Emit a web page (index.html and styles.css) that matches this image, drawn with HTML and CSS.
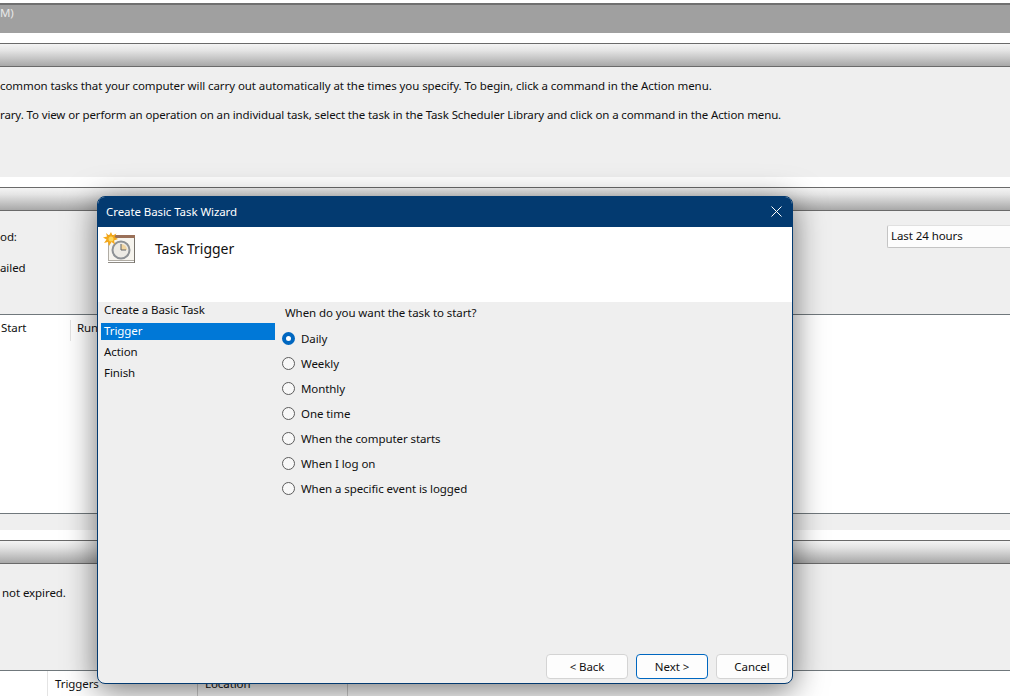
FILE: index.html
```html
<!DOCTYPE html>
<html lang="en">
<head>
    <meta charset="UTF-8">
    <title>Create Basic Task Wizard</title>
    <link rel="stylesheet" href="styles.css">
</head>
<body>
    <div class="page">
        <div class="top-band"><span>M)</span></div>

        <div class="section-head overview-head"></div>
        <div class="overview">
            <p>common tasks that your computer will carry out automatically at the times you specify. To begin, click a command in the Action menu.</p>
            <p>rary. To view or perform an operation on an individual task, select the task in the Task Scheduler Library and click on a command in the Action menu.</p>
        </div>

        <div class="section-head status-head"></div>
        <div class="status">
            <div class="status-left">
                <div class="status-period">od:</div>
                <div class="status-failed">ailed</div>
            </div>
            <div class="period-select">Last 24 hours</div>
        </div>
        <div class="table-area">
            <div class="table-head">
                <div class="th-start">Start</div>
                <div class="th-run">Run</div>
            </div>
        </div>
        <div class="status-foot"></div>

        <div class="section-head active-head"></div>
        <div class="active">not expired.</div>
        <div class="active-table">
            <div class="th-blank"></div>
            <div class="th-triggers">Triggers</div>
            <div class="th-location">Location</div>
        </div>
    </div>

    <div class="wizard">
        <div class="wizard-title">
            <span>Create Basic Task Wizard</span>
            <svg class="close-icon" width="11" height="11" viewBox="0 0 11 11">
                <path d="M0.5 0.5 L10.5 10.5 M10.5 0.5 L0.5 10.5" stroke="#ffffff" stroke-width="1" fill="none"/>
            </svg>
        </div>
        <div class="wizard-header">
            <svg class="task-icon" width="32" height="32" viewBox="0 0 32 32">
                <path d="M5 30.500 H32 M6 28.500 H32" stroke="#8e8a84" stroke-width="1"/>
                <rect x="5.500" y="3.500" width="26" height="25" fill="#f6f4ee" stroke="#b0aca4"/>
                <rect x="5" y="3" width="27" height="3" fill="#9a7058"/>
                <rect x="31" y="6" width="1" height="25" fill="#77736c"/>
                <circle cx="18" cy="18" r="8.500" fill="#eceae4" stroke="#8e9296" stroke-width="2"/>
                <path d="M18 18 V12 A6 6 0 0 1 24 18 Z" fill="#f2d6a0"/>
                <path d="M18 12 V18 H23" stroke="#60646a" stroke-width="1" fill="none"/>
                <path d="M8 0 L9.500 3.500 L13.500 1.500 L11.500 5 L15 7 L11 8.500 L12 12.500 L8.500 10 L6 14 L5 10 L1 11 L3.500 7.500 L0 5.500 L4 4.500 L3 1 L6 3.500 Z" fill="#f4a81a"/>
                <circle cx="8" cy="7" r="2.500" fill="#fbd75b"/>
            </svg>
            <div class="wizard-heading">Task Trigger</div>
        </div>
        <div class="wizard-body">
            <ul class="step-list">
                <li>Create a Basic Task</li>
                <li class="step-active">Trigger</li>
                <li>Action</li>
                <li>Finish</li>
            </ul>
            <div class="wizard-main">
                <div class="question">When do you want the task to start?</div>
                <div class="radio-row"><span class="radio radio-on"></span>Daily</div>
                <div class="radio-row"><span class="radio"></span>Weekly</div>
                <div class="radio-row"><span class="radio"></span>Monthly</div>
                <div class="radio-row"><span class="radio"></span>One time</div>
                <div class="radio-row"><span class="radio"></span>When the computer starts</div>
                <div class="radio-row"><span class="radio"></span>When I log on</div>
                <div class="radio-row"><span class="radio"></span>When a specific event is logged</div>
            </div>
        </div>
        <div class="wizard-buttons">
            <button class="btn btn-back">&lt; Back</button>
            <button class="btn btn-next">Next &gt;</button>
            <button class="btn btn-cancel">Cancel</button>
        </div>
    </div>
</body>
</html>
```

FILE: styles.css
```css
* {
    box-sizing: border-box;
}
html, body {
    margin: 0;
    height: 100%;
}
body {
    width: 1010px;
    height: 696px;
    overflow: hidden;
    position: relative;
    background-color: #ffffff;
    font-family: "Noto Sans", "Open Sans", sans-serif;
    font-size: 11.5px;
    letter-spacing: -0.08px;
    color: #101010;
}
.page {
    display: flex;
    flex-direction: column;
    height: 696px;
    padding-top: 3px;
}
.top-band {
    height: 30px;
    background-color: #a0a0a0;
    border-top: 2px solid #707070;
    color: #e8e8e8;
    padding-top: 0;
}
.section-head {
    height: 24px;
    border-top: 1px solid #6a6a6a;
    border-bottom: 1px solid #6a6a6a;
    background: linear-gradient(#f4f4f4, #e4e4e4 30%, #a8a8a8);
}
.overview-head {
    margin-top: 10px;
}
.overview {
    height: 110px;
    background-color: #efefef;
    padding-top: 10px;
}
.overview p {
    margin: 0 0 12px;
    line-height: 17px;
}
.overview p + p {
    letter-spacing: -0.12px;
}
.status-head {
    margin-top: 10px;
}
.status {
    height: 104px;
    background-color: #efefef;
    display: flex;
    justify-content: space-between;
    border-bottom: 1px solid #70787c;
}
.status-left {
    padding-top: 18px;
}
.status-period {
    height: 31px;
}
.period-select {
    width: 123px;
    height: 23px;
    margin-top: 14px;
    background-color: #fdfdfd;
    border: 1px solid #c4c4c4;
    border-right: none;
    border-top-color: #e0e0e0;
    border-radius: 2px 0 0 2px;
    padding: 2px 3px;
}
.table-area {
    height: 198px;
    background-color: #ffffff;
}
.table-head {
    display: flex;
    height: 26px;
    padding-top: 5px;
}
.th-start {
    width: 71px;
    padding-left: 1px;
    border-right: 1px solid #e4e4e4;
}
.th-run {
    padding-left: 6px;
}
.status-foot {
    height: 17px;
    background-color: #efefef;
    border-top: 1px solid #70787c;
}
.active-head {
    margin-top: 10px;
}
.active {
    height: 106px;
    background-color: #efefef;
    padding: 21px 0 0 2px;
}
.active-table {
    flex: 1;
    display: flex;
    background-color: #ffffff;
    border-top: 1px solid #70787c;
}
.th-blank {
    width: 48px;
    border-right: 1px solid #e4e4e4;
}
.th-triggers {
    width: 150px;
    padding-left: 7px;
    border-right: 1px solid #d0d0d0;
    padding-top: 5px;
}
.th-location {
    width: 150px;
    padding-left: 7px;
    border-right: 1px solid #d0d0d0;
    padding-top: 5px;
}

/* the wizard window sits over the console */
.wizard {
    position: absolute;
    left: 97px;
    top: 196px;
    width: 696px;
    height: 488px;
    display: flex;
    flex-direction: column;
    background-color: #efefef;
    border: 1px solid #033a70;
    border-radius: 8px;
    box-shadow: 0 6px 32px rgba(0, 0, 0, 0.55);
    overflow: hidden;
}
.wizard-title {
    height: 30px;
    flex: none;
    display: flex;
    align-items: center;
    justify-content: space-between;
    background-color: #033a70;
    color: #ffffff;
    padding: 0 10px 2px 8px;
}
.wizard-header {
    height: 75px;
    flex: none;
    display: flex;
    background-color: #ffffff;
    padding: 5px 0 0 5px;
}
.wizard-heading {
    font-size: 14px;
    letter-spacing: -0.05px;
    margin: 7px 0 0 20px;
}
.wizard-body {
    flex: 1;
    display: flex;
}
.step-list {
    list-style: none;
    margin: 0;
    padding: 0 10px 0 3px;
    width: 187px;
}
.step-list li {
    height: 21px;
    line-height: 16px;
    padding-left: 3px;
}
.step-list .step-active {
    height: 17px;
    margin-bottom: 4px;
    background-color: #0078d7;
    color: #ffffff;
}
.wizard-main {
    padding-top: 2px;
}
.question {
    height: 22px;
    line-height: 17px;
}
.radio-row {
    display: flex;
    align-items: center;
    height: 25px;
    margin-left: -3px;
}
.radio {
    width: 13px;
    height: 13px;
    margin-right: 6px;
    border: 1px solid #5c5c5c;
    border-radius: 50%;
    background-color: #f8f8f8;
}
.radio-on {
    border: 4px solid #0067c0;
    background-color: #ffffff;
}
.wizard-buttons {
    flex: none;
    display: flex;
    justify-content: flex-end;
    gap: 8px;
    padding: 0 4px 4px 0;
}
.btn {
    width: 82px;
    height: 25px;
    background-color: #fdfdfd;
    border: 1px solid #d4d4d4;
    border-radius: 4px;
    font-family: inherit;
    font-size: 11.5px;
    letter-spacing: -0.08px;
    color: #101010;
    padding: 0;
}
.btn-next {
    width: 72px;
    border-color: #0067c0;
}
.btn-cancel {
    width: 72px;
}
```
